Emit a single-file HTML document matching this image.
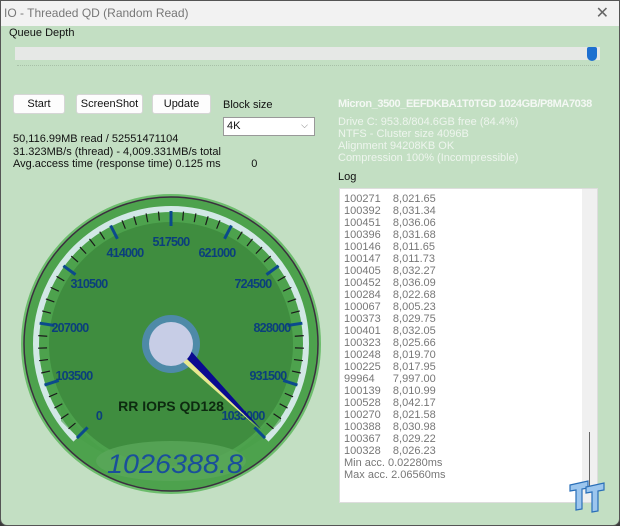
<!DOCTYPE html>
<html><head><meta charset="utf-8"><style>
*{margin:0;padding:0;box-sizing:border-box}
body{width:620px;height:526px;overflow:hidden;background:#3a3a3a;font-family:"Liberation Sans",sans-serif;font-size:11px;color:#111}
.win{position:absolute;left:0;top:0;width:620px;height:526px;background:#c3dfc3;border:1px solid #555;border-radius:0 0 7px 7px;overflow:hidden}
.title{position:absolute;left:0;top:0;width:620px;height:25px;background:#f2f2f2;color:#777;font-size:12px;line-height:25px;padding-left:3px}
.x{position:absolute;right:12px;top:0;font-size:16px;color:#666}
.abs{position:absolute;white-space:nowrap}
.btn{position:absolute;top:93px;height:20px;background:#fdfdfd;border:1px solid #d6d6d6;border-radius:3px;text-align:center;line-height:18px;font-size:11px}
.info{color:#eef5ee;font-size:11px;line-height:12px}
.log{position:absolute;left:338px;top:187px;width:259px;height:315px;background:#fff;border:1px solid #ddd}
.log pre{font-family:"Liberation Sans",sans-serif;font-size:11px;line-height:12px;color:#777;padding:4px 0 0 4px;tab-size:0}
</style></head><body><div class="win">
<div class="title">IO - Threaded QD (Random Read)<span class="x">✕</span></div>
<div class="abs" style="left:8px;top:26px">Queue Depth</div>
<div class="abs" style="left:14px;top:46px;width:585px;height:13px;background:#e6e8e6"></div>
<div class="abs" style="left:586px;top:46px;width:10px;height:14px;background:#1e6fd0;border-radius:2px 2px 5px 5px"></div>
<div class="abs" style="left:16px;top:64px;width:582px;border-top:1px dotted #a8c0a8"></div>
<div class="btn" style="left:12px;width:52px">Start</div>
<div class="btn" style="left:75px;width:67px">ScreenShot</div>
<div class="btn" style="left:151px;width:59px">Update</div>
<div class="abs" style="left:222px;top:98px">Block size</div>
<div class="abs" style="left:222px;top:116px;width:92px;height:19px;background:#fff;border:1px solid #999;padding:2px 3px">4K<span style="position:absolute;right:6px;top:2px;color:#777;font-size:9px">⌵</span></div>
<div class="abs" style="left:12px;top:132px;line-height:12.5px">50,116.99MB read / 52551471104<br>31.323MB/s (thread) - 4,009.331MB/s total<br>Avg.access time (response time) 0.125 ms&nbsp;&nbsp;&nbsp;&nbsp;&nbsp;&nbsp;&nbsp;&nbsp;&nbsp;&nbsp;0</div>
<div class="abs" style="left:337px;top:97px;color:#f4f8f4;font-weight:bold;font-size:11px;letter-spacing:-0.4px">Micron_3500_EEFDKBA1T0TGD 1024GB/P8MA7038</div>
<div class="abs info" style="left:337px;top:115px">Drive C: 953.8/804.6GB free (84.4%)<br>NTFS - Cluster size 4096B<br>Alignment 94208KB OK<br>Compression 100% (Incompressible)</div>
<div class="abs" style="left:337px;top:170px">Log</div>
<div class="log"><pre>100271    8,021.65
100392    8,031.34
100451    8,036.06
100396    8,031.68
100146    8,011.65
100147    8,011.73
100405    8,032.27
100452    8,036.09
100284    8,022.68
100067    8,005.23
100373    8,029.75
100401    8,032.05
100323    8,025.66
100248    8,019.70
100225    8,017.95
99964      7,997.00
100139    8,010.99
100528    8,042.17
100270    8,021.58
100388    8,030.98
100367    8,029.22
100328    8,026.23
Min acc. 0.02280ms
Max acc. 2.06560ms</pre>
<div style="position:absolute;right:0;top:0;width:15px;height:313px;background:#f0f0f0"></div>
<div style="position:absolute;right:7px;top:243px;width:1px;height:55px;background:#666"></div>
<svg style="position:absolute;left:228px;top:288px" width="40" height="38" viewBox="0 0 40 38"><g fill="#9cc6ee" stroke="#2a6fb8" stroke-width="1.2"><path d="M2 8 L20 4 L20 11 L14 12 L14 32 L8 33 L8 13 L2 14Z"/><path d="M18 10 L36 6 L36 13 L30 14 L30 34 L24 35 L24 15 L18 16Z"/></g></svg>
</div>
<svg class="abs" style="left:0;top:0" width="330" height="526" viewBox="0 0 330 526">
<circle cx="170" cy="343" r="150" fill="#6cbd6c"/>
<circle cx="170" cy="343" r="147" fill="#4da24d" stroke="#3b2f3f" stroke-width="1.5"/>
<path d="M74.6 438.5 A135 135 0 1 1 265.4 438.5" fill="none" stroke="#d2e8e6" stroke-width="6"/>
<circle cx="170" cy="343" r="122" fill="#3f8d3f"/>
<path d="M60 400 A122 122 0 0 0 280 400 L280 420 A150 150 0 0 1 60 420Z" fill="#4a9f4a" opacity=".6"/>
<g id="ticks"></g>
<g font-weight="bold" font-size="12.5" fill="#0b3f7c" text-anchor="middle" letter-spacing="-0.8">
<text x="98" y="419">0</text><text x="73" y="379">103500</text><text x="69" y="331">207000</text><text x="88" y="287">310500</text><text x="124" y="256">414000</text><text x="170" y="245">517500</text><text x="216" y="256">621000</text><text x="252" y="287">724500</text><text x="271" y="331">828000</text><text x="267" y="379">931500</text><text x="242" y="419">1035000</text></g>
<text x="170" y="410" text-anchor="middle" font-weight="bold" font-size="14" fill="#0d2a10">RR IOPS QD128</text>
<ellipse cx="170" cy="460" rx="75" ry="20" fill="#5aa75a" opacity=".8"/>
<text x="106" y="472" font-size="27" font-style="italic" fill="#1a4f9a" textLength="136" lengthAdjust="spacingAndGlyphs">1026388.8</text>
<circle cx="170" cy="343" r="29" fill="#4e8aa8"/>
<polygon points="178,355 190,350 260,428" fill="#0a0a90"/>
<polygon points="182,361 186,358 258,428" fill="#e8e890"/>
<circle cx="170" cy="343" r="22" fill="#c7cde6"/>
</svg>
<script>
var g=document.getElementById('ticks'),s='';
for(var i=0;i<=50;i++){var a=(-135+i*5.4)*Math.PI/180,maj=i%5==0;var r1=maj?118:124,r2=133;
var x1=170+r1*Math.sin(a),y1=343-r1*Math.cos(a),x2=170+r2*Math.sin(a),y2=343-r2*Math.cos(a);
s+='<line x1="'+x1+'" y1="'+y1+'" x2="'+x2+'" y2="'+y2+'" stroke="'+(maj?'#0b4a8c':'#1a1a1a')+'" stroke-width="'+(maj?3:1.2)+'"/>';}
g.innerHTML=s;
</script>
</div></body></html>
